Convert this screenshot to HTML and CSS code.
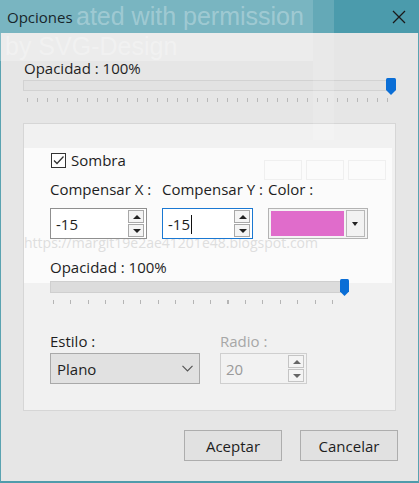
FILE: index.html
```html
<!DOCTYPE html>
<html lang="es">
<head>
<meta charset="utf-8">
<title>Opciones</title>
<link rel="stylesheet" href="styles.css">
</head>
<body>
<div class="window">
  <div class="titlebar">
    <span class="title">Opciones</span>
    <svg class="close" width="14" height="14" viewBox="0 0 14 14"><path d="M1 1L13 13M13 1L1 13" stroke="#1a1a1a" stroke-width="1.3" fill="none"/></svg>
  </div>
  <div class="content">
    <div class="label top-label">Opacidad : 100%</div>
    <div class="slider slider-top">
      <div class="track"></div>
      <div class="thumb thumb-top"><svg width="10" height="17" viewBox="0 0 10 17"><path d="M0 1.5Q0 0 1.5 0H8.5Q10 0 10 1.5V12L5 17L0 12Z" fill="#0a6ed6"/></svg></div>
      <div class="ticks ticks-top"></div>
    </div>

    <div class="group">
      <div class="ghost">
        <div class="ghost-btns"><span></span><span></span><span></span></div>
        <span class="wm-url">https://margit19e2ae41201e48.blogspot.com</span>
      </div>
      <div class="check-row">
        <span class="checkbox"><svg width="15" height="15" viewBox="0 0 15 15"><path d="M3 7.5L6 10.5L12.5 3.5" stroke="#333" stroke-width="1.3" fill="none"/></svg></span>
        <span class="label">Sombra</span>
      </div>
      <div class="fields">
        <div class="field fx">
          <div class="label">Compensar X :</div>
          <div class="spin spin-x">
            <span class="val">-15</span>
            <span class="spinbtns"><span class="sb up"></span><span class="sb down"></span></span>
          </div>
        </div>
        <div class="field fy">
          <div class="label">Compensar Y :</div>
          <div class="spin spin-y focused">
            <span class="val">-15<i class="caret"></i></span>
            <span class="spinbtns"><span class="sb up"></span><span class="sb down"></span></span>
          </div>
        </div>
        <div class="field fc">
          <div class="label">Color :</div>
          <div class="colorpick">
            <span class="swatch"></span>
            <span class="cdrop"><span class="tri"></span></span>
          </div>
        </div>
      </div>
      <div class="label op2">Opacidad : 100%</div>
      <div class="slider slider-in">
        <div class="track track-in"></div>
        <div class="thumb thumb-in"><svg width="9" height="17" viewBox="0 0 9 17"><path d="M0 1.5Q0 0 1.5 0H7.5Q9 0 9 1.5V12.5L4.5 17L0 12.5Z" fill="#0a6ed6"/></svg></div>
        <div class="ticks ticks-in"></div>
      </div>
      <div class="fields2">
        <div class="field fe">
          <div class="label">Estilo :</div>
          <div class="combo"><span>Plano</span><svg width="11" height="7" viewBox="0 0 11 7"><path d="M0.5 0.8L5.5 5.8L10.5 0.8" stroke="#555" stroke-width="1.2" fill="none"/></svg></div>
        </div>
        <div class="field fr">
          <div class="label disabled">Radio :</div>
          <div class="spin spin-r">
            <span class="val">20</span>
            <span class="spinbtns"><span class="sb up"></span><span class="sb down"></span></span>
          </div>
        </div>
      </div>
    </div>

    <div class="buttons">
      <button class="btn">Aceptar</button>
      <button class="btn">Cancelar</button>
    </div>
  </div>

  <div class="wm wm1">
    <span class="wm-t1">ated with permission</span>
    <span class="wm-t2">by SVG-Design</span>
  </div>
  <div class="wm wm-band"></div>
</div>
</body>
</html>
```
FILE: styles.css
```css
* { box-sizing: border-box; }
html, body { margin: 0; padding: 0; }
body {
  width: 419px;
  height: 483px;
  overflow: hidden;
  font-family: "Open Sans", "Noto Sans", sans-serif;
  font-size: 15px;
  color: #1e1e1e;
  background: #e6e6e6;
}
.window {
  position: relative;
  width: 419px;
  height: 483px;
  background: #e6e6e6;
  border-left: 1px solid #5aa3b1;
  border-bottom: 2px solid #4f9bab;
  border-right: 1px solid #5aa3b1;
  display: flex;
  flex-direction: column;
}
.titlebar {
  height: 33px;
  background: #4b9bac;
  display: flex;
  align-items: center;
  justify-content: space-between;
  padding: 0 13px 0 7px;
  margin-left: -1px;
  margin-right: -1px;
}
.title { font-size: 15px; color: #17262b; position: relative; z-index: 2; }
.content {
  padding: 0 22px 0 22px;
  display: flex;
  flex-direction: column;
}
.label { line-height: 18px; white-space: nowrap; }
.top-label { margin-top: 26px; padding-left: 1px; position: relative; z-index: 2; }

.slider { position: relative; }
.slider-top { height: 33px; }
.track {
  margin-top: 3px;
  height: 11px;
  background: #e2e2e2;
  border: 1px solid #d2d2d2;
}
.thumb { position: absolute; line-height: 0; }
.thumb-top { top: 1px; right: 0; }
.ticks {
  height: 4px;
  margin-top: 7px;
  background-image: repeating-linear-gradient(to right, #b8b8b8 0, #b8b8b8 1px, transparent 1px, transparent 10px);
}
.ticks-top { margin-left: 4px; margin-right: 2px; }

.group {
  position: relative;
  margin-top: 13px;
  height: 288px;
  background: #f1f1f1;
  border: 1px solid #d6d6d6;
  padding: 28px 26px 0 26px;
  display: flex;
  flex-direction: column;
}
.group > * { position: relative; }
.group > .ghost {
  position: absolute;
  left: 0; top: 24px;
  width: 368px; height: 135px;
  background: #fbfbfb;
}
.ghost-btns {
  position: absolute;
  right: 6px; top: 12px;
  display: flex;
  gap: 4px;
}
.ghost-btns span {
  width: 38px; height: 20px;
  border: 1px solid #efefef;
}
.wm-url {
  position: absolute;
  left: 0; top: 88px;
  font-size: 14px;
  color: #dedede;
  white-space: nowrap;
  line-height: 1;
}
.check-row { display: flex; align-items: center; height: 16px; gap: 5px; }
.checkbox {
  width: 15px; height: 15px;
  border: 1px solid #333;
  background: #fff;
  line-height: 0;
  display: inline-block;
  margin-left: 1px;
}
.checkbox svg { margin: -1px 0 0 -1px; }

.fields { display: flex; margin-top: 12px; }
.field { display: flex; flex-direction: column; }
.field .label { height: 18px; margin-bottom: 10px; }
.fx { width: 112px; }
.fy { width: 106px; }
.spin {
  height: 31px;
  border: 1px solid #8f8f8f;
  background: #fff;
  display: flex;
  align-items: center;
  justify-content: space-between;
  padding: 0 2px 0 5px;
}
.spin-x { width: 97px; }
.spin-y { width: 91px; }
.focused { border-color: #1a78d2; }
.val { font-size: 15px; position: relative; }
.caret {
  display: inline-block;
  width: 1px; height: 19px;
  background: #111;
  vertical-align: -4px;
  margin-left: 1px;
}
.spinbtns { display: flex; flex-direction: column; width: 16px; }
.sb {
  height: 13px;
  border: 1px solid #a8a8a8;
  background: #f4f4f4;
  position: relative;
}
.sb + .sb { margin-top: 1px; }
.sb::after {
  content: "";
  position: absolute;
  left: 3.5px; top: 3.5px;
  border-left: 4px solid transparent;
  border-right: 4px solid transparent;
}
.up::after { border-bottom: 4px solid #222; }
.down::after { border-top: 4px solid #222; }

.colorpick {
  width: 100px;
  height: 31px;
  border: 1px solid #b3b3b3;
  background: #f4f4f4;
  display: flex;
  align-items: center;
  padding: 2px;
  gap: 2px;
}
.swatch { width: 75px; height: 25px; background: #e06ccb; }
.cdrop {
  width: 19px; height: 27px;
  border: 1px solid #b8b8b8;
  background: #f2f2f2;
  position: relative;
}
.tri {
  position: absolute;
  left: 5px; top: 11px;
  border-left: 3.5px solid transparent;
  border-right: 3.5px solid transparent;
  border-top: 4px solid #222;
}

.op2 { margin-top: 19px; }
.slider-in { height: 32px; margin-right: 23px; }
.track-in { margin-top: 5px; height: 12px; background: #dcdcdc; border-color: #cfcfcf; }
.thumb-in { position: absolute; top: 3px; right: -3px; }
.ticks-in {
  margin-top: 7px;
  margin-left: 3px;
  margin-right: 1px;
  background-image: repeating-linear-gradient(to right, #b5b5b5 0, #b5b5b5 1px, transparent 1px, transparent 17.45px);
}

.fields2 { display: flex; margin-top: 24px; }
.fields2 .field .label { margin-bottom: 3px; }
.fe { width: 170px; }
.combo {
  width: 150px; height: 31px;
  background: #e1e1e1;
  border: 1px solid #a9a9a9;
  display: flex;
  align-items: center;
  justify-content: space-between;
  padding: 0 6px 0 6px;
}
.disabled { color: #a7a7a7; }
.spin-r {
  width: 87px;
  border-color: #cfcfcf;
  background: #f2f2f2;
  color: #9a9a9a;
}
.spin-r .sb { border-color: #c4c4c4; }
.spin-r .up::after { border-bottom-color: #666; }
.spin-r .down::after { border-top-color: #666; }

.buttons {
  display: flex;
  justify-content: flex-end;
  gap: 18px;
  margin-top: 19px;
  margin-right: -2px;
}
.btn {
  width: 98px; height: 31px;
  background: #e1e1e1;
  border: 1px solid #adadad;
  font-family: "Open Sans", "Noto Sans", sans-serif;
  font-size: 15px;
  color: #1e1e1e;
  padding: 0;
}

/* watermark overlays */
.wm { position: absolute; pointer-events: none; z-index: 1; }
.wm1 {
  left: -1px; top: 0;
  width: 313px; height: 61px;
  background: rgba(255, 255, 255, 0.26);
  overflow: hidden;
}
.wm-t1, .wm-t2 {
  position: absolute;
  font-family: "Liberation Sans", Arial, sans-serif;
  font-size: 25px;
  color: rgba(255, 255, 255, 0.3);
  white-space: nowrap;
  line-height: 1;
}
.wm-t1 { left: 76px; top: 4px; }
.wm-t2 { left: 5px; top: 34px; }
.wm-band {
  left: 312px; top: 0;
  width: 21px; height: 140px;
  background: rgba(255, 255, 255, 0.14);
}
```
